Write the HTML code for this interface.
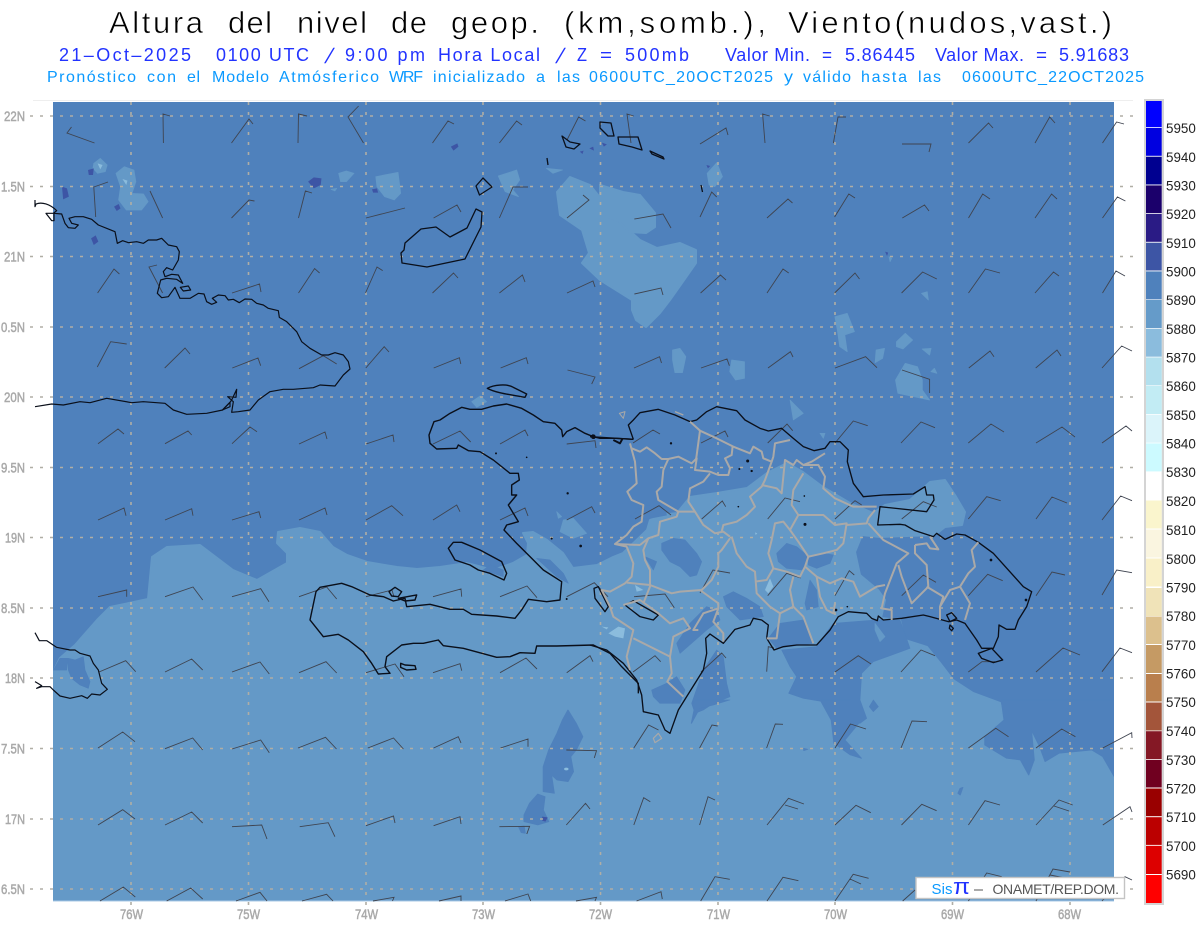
<!DOCTYPE html>
<html lang="es"><head><meta charset="utf-8"><title>Altura del nivel de geop.</title>
<style>
html,body{margin:0;padding:0;background:#fff}
svg{display:block}
text{font-family:"Liberation Sans",sans-serif}
.t{fill:#000;font-size:31px;stroke:#fff;stroke-width:.6}
.s{fill:#2233ff;font-size:18px}
.l{fill:#0a99ff;font-size:16px}
.a{fill:#a9a9a9;font-size:14px;stroke:#a9a9a9;stroke-width:.5}
.c{fill:#222;font-size:13.4px}
.lt{fill:#6499c7;stroke:#6499c7;stroke-width:2;stroke-linejoin:round}
.dk{fill:#4f81bc;stroke:#4f81bc;stroke-width:2;stroke-linejoin:round}
.p{fill:#3d55a5}
.pl{fill:#8bbcdd}
</style></head><body>
<svg xmlns="http://www.w3.org/2000/svg" width="1200" height="927" viewBox="0 0 1200 927">
<defs><clipPath id="pl"><rect x="53" y="102" width="1061" height="799"/></clipPath></defs>
<rect width="1200" height="927" fill="#fff"/>
<path d="M33 100.5H1133" stroke="#eee" stroke-width="1"/>
<text class="t" x="109" y="33" textLength="94">Altura</text>
<text class="t" x="228" y="33" textLength="44">del</text>
<text class="t" x="297" y="33" textLength="70">nivel</text>
<text class="t" x="391" y="33" textLength="36">de</text>
<text class="t" x="451" y="33" textLength="88">geop.</text>
<text class="t" x="564" y="33" textLength="202">(km,somb.),</text>
<text class="t" x="788" y="33" textLength="324">Viento(nudos,vast.)</text>
<text class="s" x="59" y="61" textLength="132">21–Oct–2025</text>
<text class="s" x="216" y="61" textLength="93">0100 UTC</text>
<text class="s" transform="translate(327 63) skewX(-18)" text-anchor="middle" style="font-size:21px">/</text>
<text class="s" x="345" y="61" textLength="80">9:00 pm</text>
<text class="s" x="438" y="61" textLength="102">Hora Local</text>
<text class="s" transform="translate(558 63) skewX(-18)" text-anchor="middle" style="font-size:21px">/</text>
<text class="s" x="577" y="61" textLength="10" lengthAdjust="spacingAndGlyphs">Z</text>
<text class="s" x="600" y="61" textLength="12" lengthAdjust="spacingAndGlyphs">=</text>
<text class="s" x="625" y="61" textLength="64">500mb</text>
<text class="s" x="725" y="61" textLength="85">Valor Min.</text>
<text class="s" x="822" y="61" textLength="10" lengthAdjust="spacingAndGlyphs">=</text>
<text class="s" x="845" y="61" textLength="70">5.86445</text>
<text class="s" x="935" y="61" textLength="89">Valor Max.</text>
<text class="s" x="1036" y="61" textLength="11" lengthAdjust="spacingAndGlyphs">=</text>
<text class="s" x="1059" y="61" textLength="70">5.91683</text>
<text class="l" x="47" y="82" textLength="89">Pronóstico</text>
<text class="l" x="147" y="82" textLength="29">con</text>
<text class="l" x="187" y="82" textLength="13">el</text>
<text class="l" x="212" y="82" textLength="57">Modelo</text>
<text class="l" x="279" y="82" textLength="100">Atmósferico</text>
<text class="l" x="389" y="82" textLength="34">WRF</text>
<text class="l" x="433" y="82" textLength="92">inicializado</text>
<text class="l" x="536" y="82" textLength="9" lengthAdjust="spacingAndGlyphs">a</text>
<text class="l" x="557" y="82" textLength="23">las</text>
<text class="l" x="589" y="82" textLength="184">0600UTC_20OCT2025</text>
<text class="l" x="784" y="82" textLength="9" lengthAdjust="spacingAndGlyphs">y</text>
<text class="l" x="803" y="82" textLength="48">válido</text>
<text class="l" x="861" y="82" textLength="46">hasta</text>
<text class="l" x="918" y="82" textLength="23">las</text>
<text class="l" x="962" y="82" textLength="182">0600UTC_22OCT2025</text>

<rect x="53" y="102" width="1061" height="799" fill="#4f81bc"/>
<g clip-path="url(#pl)">
<path class="lt" d="M53 672L60 658L75 645L97 620L110 607L148 599L152 557L167 547L200 545L233 570L257 580L287 563L287 553L277 543L278 532L300 528L320 532L333 547L347 555L367 562L397 567L417 569L440 567L467 563L493 570L513 563L527 555L528 543L523 533L533 532L547 540L563 553L573 568L597 565L613 557L623 553L647 530L650 520L662 515L677 513L690 497L717 493L747 488L767 473L787 463L803 472L823 487L850 503L873 513L885 505L910 500L930 482L945 480L955 495L965 512L962 525L945 527L935 535L880 537L862 535L855 552L860 575L878 590L885 600L881 618L900 620L905 640L927 647L940 663L953 680L973 693L1000 703L1004 720L1120 720V905H50Z"/>
<path class="lt" d="M570 177L557 192L560 215L582 230L589 253L582 263L600 280L632 300L632 310L636 320L646 327L660 313L670 300L682 283L696 263L696 250L680 243L657 248L640 240L620 222L603 215L605 205L598 195L590 185Z"/>
<path class="lt" d="M600 185L623 192L640 195L655 213L655 227L646 233L629 232L618 220L600 215Z"/>
<g transform="translate(0 620) scale(.33333)">
<path class="dk" d="M205 115L225 120L250 110L255 150L270 185L265 205L240 195L215 175L205 150ZM160 150L180 115L205 115L200 150L180 150Z"/>
</g>
<g transform="translate(280 380) scale(.33333)">
<path class="dk" d="M770 535L810 540L850 580L865 610L830 590ZM610 570L630 555L670 570L670 590Z"/>
<path class="lt" d="M575 65L600 48L620 65L590 82ZM850 420L880 415L920 460L880 475L840 455ZM830 395L845 410L835 415Z"/>
</g>
<g transform="translate(590 390) scale(.33333)">
<path class="dk" d="M215 460L250 445L285 450L320 490L335 515L320 555L300 560L270 530L240 515L215 480Z"/>
<path class="dk" d="M560 490L590 460L620 470L655 500L640 540L590 535L565 515Z"/>
<path class="dk" d="M655 505L700 490L730 495L720 520L680 535L655 525Z"/>
<path class="dk" d="M400 620L430 605L470 625L510 650L520 680L450 690L410 650Z"/>
<path class="dk" d="M645 640L660 570L680 600L685 650L650 660Z"/>
<path class="dk" d="M165 500L200 515L190 540Z"/>
<path class="dk" d="M570 700L640 690L670 760L560 775L535 745Z"/>
<path class="dk" d="M300 700L350 650L380 660L390 690L350 720L270 790L260 760Z"/>
<path class="dk" d="M185 900L230 880L260 860L285 900L270 940L210 940L190 920Z"/>
<path class="dk" d="M380 780L400 800L410 880L420 920L370 940L340 960L315 970L305 940L340 840Z"/>
<path class="dk" d="M575 780L600 830L620 860L596 910L640 925L700 935L725 990L810 1000L830 985L810 930L815 850L850 815L960 775L930 690L860 690L730 700L700 740L680 770Z"/>
<path class="dk" d="M850 930L865 950L850 965L838 950Z"/>
<path class="dk" d="M120 380L160 345L210 350L230 375L180 385L150 385Z"/>
<path class="lt" d="M600 30L640 70L610 90ZM690 130L705 130L700 145Z"/>
<path class="pl" d="M525 600L540 565L550 590L535 610ZM55 730L85 710L105 715L100 745L75 740ZM135 585L160 600L140 605ZM35 710L55 712L50 718ZM495 427L502 430L497 435Z"/>
<path class="lt" d="M855 700L885 740L870 755L855 720Z"/>
</g>
<g transform="translate(280 700) scale(.5485 .33333)">
<path class="dk" d="M525 30L540 70L552 110L540 150L530 170L535 215L525 245L505 240L495 225L500 280L480 275L480 200L490 150L505 100L515 60Z"/>
<path class="dk" d="M470 282L483 290L480 330L490 365L470 375L445 365L445 345L455 310ZM435 380L445 378L447 400L440 398Z"/>
<path class="dk" d="M985 0L1040 0L1065 50L1030 120L1060 175L1040 165L1010 130L1005 60Z"/>
<path class="dk" d="M1315 0H1540V230H1521L1500 170L1480 150L1420 160L1395 185L1385 140L1370 90L1375 180L1365 225L1350 180L1325 175L1285 135L1285 110L1320 60Z"/>
<path class="dk" d="M755 0L820 0L790 15L765 25L750 70L755 30Z"/>
<path class="dk" d="M955 145L962 148L955 152ZM1240 265L1245 262L1240 285L1236 280Z"/>
<circle class="pl" cx="522" cy="207" r="4"/>
<path class="p" d="M478 350L488 352L484 365L478 362Z"/>
</g>
<g transform="scale(.3827 .33333)">
<path class="lt" d="M245 490L262 475L280 495L275 515L255 520L243 505Z"/>
<path class="lt" d="M303 520L325 500L350 510L355 545L345 580L375 582L387 605L370 630L330 630L310 600L315 560Z"/>
<path class="lt" d="M885 520L905 513L925 520L905 545L890 545ZM982 530L1040 517L1047 580L1030 600L1005 590L985 560ZM865 568L880 565L875 573ZM1302 528L1350 510L1358 540L1340 570L1355 590L1320 575ZM1428 505L1470 510L1445 520Z"/>
<path class="pl" d="M255 490L268 495L262 508ZM320 537L333 542L330 555Z"/>
<path class="p" d="M162 560L175 565L180 590L165 598ZM230 510L245 505L243 525L232 525ZM298 620L310 612L315 625L305 633ZM238 715L250 706L257 725L245 735ZM805 545L820 532L840 535L838 555L820 565ZM972 568L985 565L988 578L975 578ZM1178 440L1195 430L1198 440L1185 452ZM1540 445L1550 440L1552 452ZM1515 455L1525 452L1522 462Z"/>
</g>
<g transform="translate(600 0) scale(.3827 .33333)">
<path class="lt" d="M280 520L305 488L320 530L300 560L285 555ZM840 880L855 875L858 900ZM755 770L762 775L758 785Z"/>
<path class="p" d="M5 428L18 433L10 440ZM745 755L753 758L750 768ZM278 495L288 498L282 505Z"/>
</g>
<g transform="translate(360 300) scale(.4847 .33333)">
<path class="lt" d="M645 150L660 145L672 170L665 218L650 218L645 180ZM767 180L793 185L793 235L775 240L763 215ZM980 50L1005 40L1020 95L1000 105L1005 155L990 140L985 90ZM1065 150L1082 145L1078 175L1063 188ZM1107 125L1125 100L1140 120L1120 147L1107 140ZM1160 147L1178 145L1175 165ZM1105 240L1125 190L1150 200L1160 240L1160 270L1175 300L1110 280ZM1185 205L1190 220L1178 215Z"/>
</g>
</g>
<path d="M53 901H1114" stroke="#a9c8e4" stroke-width="1"/>

<path fill="none" stroke="#b0aea5" stroke-width="1.6" stroke-dasharray="3 7" d="M30 116H1133M30 186.5H1133M30 256.5H1133M30 327H1133M30 397H1133M30 467.5H1133M30 537.5H1133M30 608H1133M30 678H1133M30 748.5H1133M30 819H1133M30 889H1133M131 102V907M248.5 102V907M366 102V907M483 102V907M600.5 102V907M718 102V907M835 102V907M952.5 102V907M1070 102V907"/>

<path fill="none" stroke="#3f4450" stroke-width=".9" d="
M94.5 143L67 133L71.5 127M163.4 143L163 114L170 116M231.5 143L249 119L253 124M298 143L298.5 114L307 116M363.5 143L348 117L358.6 106M432.5 143L448 121L454 124M499.4 143L516.6 121L522 125M567 140L578.6 117L585.5 121M631 143L627 114L633.7 116M700 144L726 128L728 135M765 143L762.6 114L769.5 116M833.4 143L838 117L846 117M902 144L931 144L929 152M968.5 143L988.5 123L993 128M1035 143L1049.7 117L1055 123M1102.5 143L1116.6 122L1124 124
M95.7 217L93.8 187L108 182M162.6 218L150 191M231.5 218L249 200L254.5 201M298.5 218L305.4 191L312 193M366 218L405 208M433.6 218L457 205L461 212M499.4 218L513 187L528 187M567 218L589 200L583 195M700 217L711.7 192L716.7 197M634.4 219L663 214L671 228M767 218L788 199L792.5 203M834.6 217L848.8 194L855 198M902.3 218L924.5 205L929 211M968.5 218L982.7 194L990 199M1035 218L1051.6 194L1057 199M1102.5 218L1117.4 197L1125.4 201
M97.6 293L114 269L119.4 274M162.6 293L149 267L157 265M232 293L259.5 284L261 292M298.5 293L314.6 268.5L319.6 273M365.5 293L377 267L382.7 270.6M432.5 293L453.5 273L458 278M499.4 293L522.4 275L525 282M567 293L593 281L595 287M634.4 294L661 288L663 295M700.6 293L720.5 275L726 280M767 293L783 269L788.7 273M834.6 293L855 273L859.5 279M901.6 293L922.6 272L936.8 279M968.5 293L985.4 269L1000 273M1035 293L1053.5 272L1059 276M1102.5 293L1116 271L1125 276
M97.3 367L110.7 341.7L126.7 344M164.7 368L185 348L190 354M232.3 368L258 358L260.7 365.7M299 368.7L323.3 355.7L336.7 364M365.8 368L384.2 346.7L389 352M433.7 368L459.4 357.7L460.8 364M500.6 368L526.3 357.7L528 364M567.5 370L595 377L591.7 384M634 368L659.6 356.7L661.5 363M701 368L727 359L729.4 365.7M768 368L790.4 351.7L793 357M835 368L865.6 356.7L877 367.7M902 370L929.6 379.3L929.6 393M968.8 368L990 351L994 356.7M1035.7 368L1057 350L1061 356M1102 368L1121.7 346L1132 351
M98 443.7L118 429L124 434M165 443.7L188 431L191.7 435M232 443.7L250 427L257 431.7M299 444L325 432L327 439M366 444L393 435L394 442M433 444L460 431L470.7 442M500 444L525 430L528 436M566.7 444L595 440.7L596 448M633 443L653 430L660 434M701 443L725 431L728 437M767.7 443L787 424L792.7 430.7M835 443L853.3 421L867.7 425.7M901 443L921 422L935 427.7M968.3 443L991 424L1004 432M1036 443L1062 427L1075 437M1102 443L1126 426L1132 431
M98 520L124 508L126 515.7M165 520L191.7 508.7L193 515.7M232 520L259 511.7L260.7 518M299 520L325 508L327 515M366 520L391.7 505.7L403 515.7M433 520L456.7 505L460 511.7M500 520L525 508L528 516M566.7 520L591.7 506.7L595 513M635 519L659 505.7L671 515M701.7 519L722.3 501L725.7 506.7M767.7 519L785 498L800 501.7M835 519L855 500.7L861.7 505M901.7 519L923.3 501.7L936.7 507M968.3 519L986.7 496.7L1000.7 500.7M1036 519L1052 497L1067 503M1102 520L1120.7 496L1132 500.7
M98 596.7L126.7 590L126.7 596.7M165 596.7L193 587L202.7 600M232 596.7L260.7 588.7L269 601.7M299 596.7L326.7 587L336.7 599M366 596.7L392 590L394 597M433 596.7L461 589L461.7 596.7M500 596.7L527 586L537 597.7M566.7 596.7L594.3 582.7L608 596.7M634 596.7L665 594L674.3 607.7M700 593L713 570L730 573M767.7 595.7L786.7 573.3L800.7 578M835 595.7L849.3 570.7L854.3 575M901.7 595.7L923.3 575L936 582.3M968.3 595.7L987.7 574.3L1002.7 580.7M1036 595.7L1052 572L1065 575M1102 595L1116.7 570L1132 572.7
M99 672L125.7 660.7L135.7 671.7M165 672L191.7 659L202.7 670M232 672L260 662L269.3 674M299 672.7L326 661.7L336.7 673M366 672.7L395 664L404 676.7M433 672.7L460 663.7L461.7 670.7M500 672.7L526 658L537 669M566.7 672.7L590 655.7L593 661.7M633 672L655 655.7L660.7 661.7M701 672L721.7 653L726 658M766.7 671.7L768.3 646.7L774 648M835 672L858.3 655.7L871 664M901 672L921 650L935 655.7M968.3 672L982 661.7L995 661.7M1036 672L1063 648L1080 655M1102 671.7L1120 648L1132 652.7
M98 748L122.7 732L135 741.7M165 748.7L192.7 738L202.7 750M232 749L260.7 740L269.3 752.7M298 748L325.5 737.3L336.5 749M367.8 748L393.5 738L403.4 749M433.6 748L458.3 736.7L461 743M500.5 748L528 739L528 746.7M566.3 750L596.5 750.7L594.3 758M633.8 748L648.6 725L658.5 730M699.6 748L712 725L717.7 726M766.6 748L775.3 724L783 724.3M835 748L850.5 724L866 729M901 748L912 721L927 721.7M968.4 748L995.8 728.3L1008.5 736.7M1036 748L1061.7 729L1075.4 736.7M1102.8 748L1131.7 732.7L1132 738
M98 825L122.7 809.7L135 819M165 825L191.7 812L202.7 823M232 826.7L261.7 825L267 839M299.7 826.7L328.3 822.7L334.9 836.7M366 825.7L393.5 816L395 823M433.6 825.7L460 816.7L461 824M499.4 826.7L529.6 826.3L526.8 834M566.3 825L585.5 803.3L590 809M633.8 825L643.7 797.7L650.3 801.7M699.6 825L708 796.7L715 800M767 825L788.5 798.3L803.9 804M785 805L798 809M835 825L856 805.3L870.8 812.7M901.5 825L921.8 804.3L936.6 810.7M968.4 825L985 800.7L1000 805M1036 825L1059 800L1072.7 805M1054 806L1069 811M1102.8 825L1130 806.7L1132 812
M100 901L123.3 887L135.3 897M166.7 901L190.7 888L202.7 899M236 901L260 892.3L267 901M302 901L326.6 894.3L333 901M373 901L394 897.3L392.5 901M439 901L461 896L461 901M505 901L528 894L530.7 901M576 901L596.5 897.3L595 901M636.6 901L661 891.7L662.3 899M700.7 901L715 876.7L729.8 879.3M767 901L783 877.3L798.4 880.7M835 901L853.2 874.3L868.6 878.3M850 879L861 884M902.7 901L915 890M968.4 901L986.7 873L1001.7 876.7M1036 901L1053 869L1070 872M1050 875L1065 878M1102 901L1125 876.7L1132 880"/>

<g fill="none" stroke="#0a0f1a" stroke-linejoin="round">
<g transform="translate(0 180) scale(.33333)" stroke-width="3.6">
<path d="M105 60V80L108 72C125 65 150 72 170 92L160 100L138 100L155 122L162 122L162 100L185 102L195 130L205 143L225 145L235 135L215 130L207 115L225 110L250 110L275 118L295 135L345 155L352 190L368 182L385 188L410 185L430 190L445 180L470 180L485 175L505 195L530 200L538 215L535 240L518 270L500 263L490 275L495 290L515 283L535 285L548 310L530 298L500 295L482 300L472 340L485 353L505 350L525 322L540 355L570 355L595 340L612 342L620 365L635 373L650 367L637 355L655 345L675 347L685 360L700 358L718 368L735 357L755 358L770 370L790 375L805 385L835 392L838 412L860 425L890 455L905 485L930 505L965 525L985 525L1005 518L1030 525L1045 545L1050 567L1030 585L1005 618L960 615L940 623L880 628L850 628L810 635L775 660L750 690L715 695L695 697L700 665L683 650L708 652L710 628L695 660L690 667L668 690L620 700L560 703L520 690L495 670L430 665L395 668L320 655L270 668L240 665L190 675L155 672L105 680"/>
<path d="M541 322L565 318L572 330L550 333ZM667 690L690 667L690 680Z"/>
</g>
<g transform="translate(0 620) scale(.33333)" stroke-width="3.6">
<path d="M105 38L118 62L140 62L170 82L210 90L225 90L240 100L270 108L280 130L295 150L305 190L322 208L300 225L275 222L262 235L245 227L210 235L180 228L160 210L150 200L125 200L110 205L125 197L105 185"/>
</g>
<g transform="translate(280 380) scale(.33333)" stroke-width="4.2">
<path d="M622 25C640 15 680 10 700 22L740 42L735 52C700 45 650 40 622 25Z"/>
<path d="M1060 178L1005 175L960 175L940 170L915 160L885 143L860 155L848 170L845 150L825 130L790 125L760 105L725 85L680 72L640 78L605 88L570 88L545 82L510 100L480 120L462 125L447 165L450 190L470 207L530 205L535 195L565 212L600 215L640 240L690 280L715 280L718 300L695 315L695 345L710 345L685 375L715 425L680 435L672 450L710 490L750 530L790 570L845 605L840 660L800 665L745 658L725 690L705 715L650 708L575 703L550 688L510 688L450 673L380 680L375 655L340 663L310 650L270 645L215 620L185 610L120 622L108 635L90 720L130 770L175 763L205 780L250 815L275 850L295 882L330 880L315 860L320 830L365 795L400 790L430 790L475 780L490 797L550 805L650 832L690 830L720 818L765 820L770 798L830 798L940 795L990 820L1025 860L1045 880L1075 910L1075 940"/>
<path d="M505 505L520 487L545 487L600 510L665 545L680 580L672 600L630 580L595 570L570 555L525 540Z"/>
<path d="M327 635L345 622L365 635L355 650L335 648ZM355 655L410 645L405 660L375 663ZM362 850L375 855L405 857L408 868L380 870L362 862Z"/>
<path d="M1000 180L1020 190L1028 175M935 165L945 175" stroke-width="6"/>
</g>
<g transform="translate(590 390) scale(.33333)" stroke-width="4">
<path d="M130 148L115 105L130 90L150 68L205 58L255 75L300 95L320 90L350 65L380 50L440 62L465 90L510 115L535 123L575 115L610 145L640 170L672 182L705 175L720 155L750 155L775 180L772 215L790 280L820 320L880 315L970 312L1005 290L1010 315L1030 315L1032 330L1010 365L870 350L863 405L930 403L945 405L975 422L1030 440L1040 430L1065 448L1100 432L1125 435L1165 457L1210 490L1300 590L1325 605L1310 650L1285 690L1275 718L1250 718L1227 705L1225 740L1210 775L1175 775L1160 750L1125 700L1100 690L1075 695L1020 680L1000 675L935 685L880 690L865 678L862 692L845 685L830 670L775 665L745 680L720 720L680 765L620 765L580 770L552 780L530 745L535 705L515 690L490 685L480 705L435 718L400 760L360 732L347 745L350 790L340 840L290 920L265 960L240 1030L225 1020L205 975L160 965L155 915L140 870L100 820L50 780L0 765"/>
<path d="M1165 790L1205 775L1238 810L1210 818L1175 805ZM1070 675L1085 668L1100 685L1080 695ZM1080 705L1090 715L1085 722L1078 715ZM12 595L25 590L55 650L45 665L15 625ZM105 645L130 632L205 675L190 690L150 680ZM0 140L130 148"/>
</g>
<g stroke-width="1.3">
<path d="M562 136L566 147L574 149L580 144L570 142Z"/>
<path d="M476 186L483 178L492 187L479.5 195Z"/>
<path d="M600 122L611 123L614 136L608 136L600 128Z"/>
<path d="M618 137L638 137L642 150L632 147L619 144Z"/>
<path d="M650 151L663 157L664 159L652 154Z"/>
<path d="M547 158L548 165M701 185L702.5 192"/>
<path d="M401 253L402 263L427 267L465 259L481 227L482 212L476 209L467 228L450 237L436 227L421 229L405 243L404 250Z"/>
</g>
</g>
<g fill="#0a0f1a">
<g transform="translate(590 390) scale(.33333)">
<circle cx="243" cy="160" r="3.5"/><circle cx="473" cy="213" r="4.5"/><circle cx="448" cy="237" r="3"/><circle cx="485" cy="243" r="3.5"/><circle cx="645" cy="403" r="4.5"/><circle cx="1203" cy="510" r="4"/><circle cx="1308" cy="630" r="4"/><circle cx="738" cy="660" r="4"/><circle cx="445" cy="350" r="2.5"/><circle cx="643" cy="318" r="2.5"/><circle cx="772" cy="650" r="2.5"/><circle cx="10" cy="140" r="7"/><circle cx="150" cy="465" r="2.5"/>
</g>
<g transform="translate(280 380) scale(.33333)">
<circle cx="648" cy="220" r="3"/><circle cx="740" cy="232" r="2.5"/><circle cx="863" cy="340" r="3.5"/><circle cx="815" cy="476" r="3"/><circle cx="902" cy="498" r="4"/><circle cx="860" cy="657" r="3"/>
</g>
</g>
<g fill="none" stroke="#aaa9a8" stroke-width="6" stroke-linejoin="round" transform="translate(590 390) scale(.33333)">
<path d="M120 160L135 215L140 280L112 305L125 330L160 345L155 395L130 410L110 435L75 462L110 470L130 520L125 560L105 580L60 605L35 600L60 650L70 680L130 720L110 800L120 840"/>
<path d="M125 175L150 185L170 172L195 190L215 207L235 207L265 200L305 220L320 205L315 240L360 245L385 255L415 255L420 235L405 205L425 195L428 168"/>
<path d="M300 95L330 122L380 145L430 170L480 190L490 170L515 185L520 205L545 215L550 200L555 160L600 150"/>
<path d="M330 122L318 210M235 207L220 240L215 290L200 305L205 330L265 365L315 365"/>
<path d="M360 250L340 275L300 295L295 335L315 365L340 405L375 430L400 425L420 440"/>
<path d="M545 215L525 270L515 290L480 320L495 350L470 375L440 395L400 405L395 425"/>
<path d="M515 285L560 295L575 310L585 210L610 225L620 210L640 225L665 215L705 190"/>
<path d="M640 225L685 225L705 260L700 295L735 325L790 350L820 350L860 350"/>
<path d="M640 250L610 300L605 345L625 375L600 420L625 455L655 500L645 530L630 560L590 545L550 535L535 490L545 450L555 400L580 395L600 420"/>
<path d="M625 375L700 375L735 405L770 400L760 460L740 480L700 490L655 500"/>
<path d="M770 405L830 400L835 385L855 360M835 400L880 450L955 490L920 520L885 610L875 655L905 660L905 690"/>
<path d="M645 530L680 560L720 580L755 565L790 575L810 620L860 590L885 585"/>
<path d="M680 560L690 620L710 660L730 670L735 640"/>
<path d="M610 560L600 600L610 650L640 680L670 760M610 650L570 670L560 745L530 745"/>
<path d="M425 440L440 490L470 530L495 545L500 610L540 650L570 670M495 575L530 570L550 535"/>
<path d="M420 445L395 480L385 490L385 530L365 570L335 600L270 605L245 610L180 585L110 578"/>
<path d="M175 445L205 435L210 395L260 380L265 365M75 462L150 465L175 445L160 480L165 510L180 540L180 590L160 640"/>
<path d="M330 600L385 640L385 655L340 670L310 720L325 720M385 655L370 695L400 730L400 755"/>
<path d="M100 645L150 630L205 670L240 700L280 685L300 715L250 740L240 800L130 745M240 800L245 850L232 875L280 920"/>
<path d="M975 465L1010 460L1020 475L1045 478L1020 440M975 465L975 490L1010 525L1015 590L980 625L965 640L935 560L925 525"/>
<path d="M1165 457L1145 480L1155 530L1135 550L1110 590L1140 640L1125 690M1110 590L1080 600L1050 650L1050 690M1010 590L1060 620L1050 650"/>
<path d="M190 1045L205 1030L215 1045L195 1058Z" stroke-width="3.5"/>
<path d="M255 65L280 75" stroke-width="4"/>
<path d="M88 70L105 65L100 85Z" stroke-width="3"/>
</g>

<text class="a" x="4" y="121" textLength="21" lengthAdjust="spacingAndGlyphs">22N</text>
<text class="a" x="1" y="191.5" textLength="24" lengthAdjust="spacingAndGlyphs">1.5N</text>
<text class="a" x="4" y="261.5" textLength="21" lengthAdjust="spacingAndGlyphs">21N</text>
<text class="a" x="1" y="332" textLength="24" lengthAdjust="spacingAndGlyphs">0.5N</text>
<text class="a" x="4" y="402" textLength="21" lengthAdjust="spacingAndGlyphs">20N</text>
<text class="a" x="1" y="472.5" textLength="24" lengthAdjust="spacingAndGlyphs">9.5N</text>
<text class="a" x="5" y="542.5" textLength="20" lengthAdjust="spacingAndGlyphs">19N</text>
<text class="a" x="1" y="613" textLength="24" lengthAdjust="spacingAndGlyphs">8.5N</text>
<text class="a" x="5" y="683" textLength="20" lengthAdjust="spacingAndGlyphs">18N</text>
<text class="a" x="1" y="753.5" textLength="24" lengthAdjust="spacingAndGlyphs">7.5N</text>
<text class="a" x="5" y="824" textLength="20" lengthAdjust="spacingAndGlyphs">17N</text>
<text class="a" x="1" y="894" textLength="24" lengthAdjust="spacingAndGlyphs">6.5N</text>
<text class="a" x="120" y="919" textLength="23" lengthAdjust="spacingAndGlyphs">76W</text>
<text class="a" x="237" y="919" textLength="23" lengthAdjust="spacingAndGlyphs">75W</text>
<text class="a" x="355" y="919" textLength="23" lengthAdjust="spacingAndGlyphs">74W</text>
<text class="a" x="472" y="919" textLength="23" lengthAdjust="spacingAndGlyphs">73W</text>
<text class="a" x="589" y="919" textLength="23" lengthAdjust="spacingAndGlyphs">72W</text>
<text class="a" x="707" y="919" textLength="23" lengthAdjust="spacingAndGlyphs">71W</text>
<text class="a" x="824" y="919" textLength="23" lengthAdjust="spacingAndGlyphs">70W</text>
<text class="a" x="941" y="919" textLength="23" lengthAdjust="spacingAndGlyphs">69W</text>
<text class="a" x="1058" y="919" textLength="23" lengthAdjust="spacingAndGlyphs">68W</text>

<rect x="916" y="877.5" width="208.5" height="21" fill="#fff" stroke="#c4c4c4" stroke-width="1.4"/>
<text x="931.5" y="894" font-size="15" fill="#0a99ff" textLength="21">Sis</text>
<text x="953" y="894" font-size="22" fill="#2233ff" textLength="17" lengthAdjust="spacingAndGlyphs">π</text>
<text x="974" y="894" font-size="15" fill="#555" textLength="9" lengthAdjust="spacingAndGlyphs">–</text>
<text x="992.5" y="894" font-size="14" fill="#555" textLength="126.5">ONAMET/REP.DOM.</text>

<rect x="1144" y="99" width="20" height="806" fill="#d4d4d4"/>
<rect x="1146" y="101" width="15.7" height="802" fill="#fff"/>
<g>
<rect x="1146" y="101" width="15.7" height="26.2" fill="#0000ff"/>
<rect x="1146" y="128" width="15.7" height="27.8" fill="#0000e0"/>
<rect x="1146" y="156.7" width="15.7" height="27.8" fill="#000090"/>
<rect x="1146" y="185.4" width="15.7" height="27.8" fill="#1b006b"/>
<rect x="1146" y="214" width="15.7" height="27.8" fill="#2a1b85"/>
<rect x="1146" y="242.7" width="15.7" height="27.8" fill="#3d55a5"/>
<rect x="1146" y="271.4" width="15.7" height="28" fill="#4f81bc"/>
<rect x="1146" y="300" width="15.7" height="28" fill="#659bc9"/>
<rect x="1146" y="328.7" width="15.7" height="28" fill="#8bbcdd"/>
<rect x="1146" y="357.4" width="15.7" height="28" fill="#b3e0ee"/>
<rect x="1146" y="386" width="15.7" height="28" fill="#c2ecf4"/>
<rect x="1146" y="414.7" width="15.7" height="28" fill="#dbf4fa"/>
<rect x="1146" y="443.4" width="15.7" height="28" fill="#ccfaff"/>
<rect x="1146" y="500.5" width="15.7" height="28" fill="#faf5cd"/>
<rect x="1146" y="529.5" width="15.7" height="28" fill="#faf5e0"/>
<rect x="1146" y="558.5" width="15.7" height="28" fill="#f9f0c8"/>
<rect x="1146" y="588" width="15.7" height="28" fill="#f0e3b8"/>
<rect x="1146" y="616.5" width="15.7" height="27.5" fill="#dcc08d"/>
<rect x="1146" y="645" width="15.7" height="28" fill="#c59a64"/>
<rect x="1146" y="674" width="15.7" height="27.5" fill="#b97f4d"/>
<rect x="1146" y="702.5" width="15.7" height="28" fill="#a3553a"/>
<rect x="1146" y="731.2" width="15.7" height="28" fill="#841825"/>
<rect x="1146" y="760" width="15.7" height="27.5" fill="#700020"/>
<rect x="1146" y="788.5" width="15.7" height="27.7" fill="#990000"/>
<rect x="1146" y="817.2" width="15.7" height="27.7" fill="#bb0000"/>
<rect x="1146" y="845.8" width="15.7" height="28.2" fill="#dd0000"/>
<rect x="1146" y="875" width="15.7" height="28" fill="#ff0000"/>
</g>
<text class="c" x="1166" y="133">5950</text><text class="c" x="1166" y="162">5940</text><text class="c" x="1166" y="190.5">5930</text><text class="c" x="1166" y="219">5920</text><text class="c" x="1166" y="248">5910</text><text class="c" x="1166" y="276.5">5900</text><text class="c" x="1166" y="305">5890</text><text class="c" x="1166" y="334">5880</text><text class="c" x="1166" y="362.5">5870</text><text class="c" x="1166" y="391">5860</text><text class="c" x="1166" y="420">5850</text><text class="c" x="1166" y="448.5">5840</text><text class="c" x="1166" y="477">5830</text><text class="c" x="1166" y="506">5820</text><text class="c" x="1166" y="535">5810</text><text class="c" x="1166" y="564">5800</text><text class="c" x="1166" y="592.5">5790</text><text class="c" x="1166" y="621">5780</text><text class="c" x="1166" y="650">5770</text><text class="c" x="1166" y="678.5">5760</text><text class="c" x="1166" y="707">5750</text><text class="c" x="1166" y="736">5740</text><text class="c" x="1166" y="765">5730</text><text class="c" x="1166" y="793.5">5720</text><text class="c" x="1166" y="822">5710</text><text class="c" x="1166" y="851">5700</text><text class="c" x="1166" y="879.5">5690</text>
</svg>
</body></html>
